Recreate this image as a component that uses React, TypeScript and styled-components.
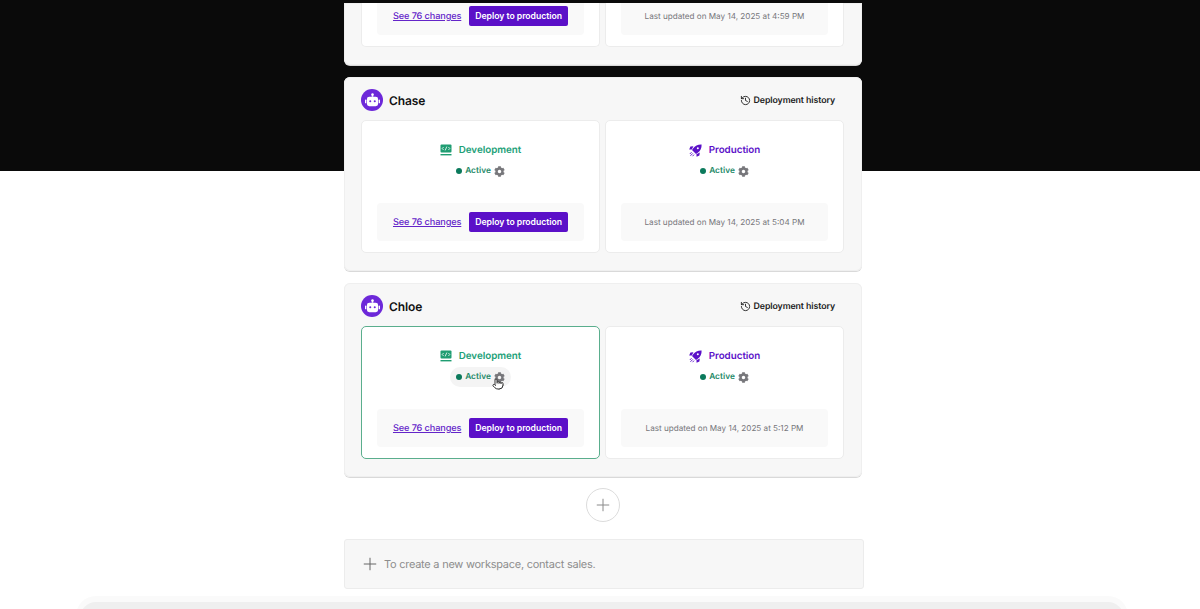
import styled, { createGlobalStyle } from "styled-components";
import { History, Plus, Pointer } from "lucide-react";
import { FaCog } from "react-icons/fa";

const GlobalStyle = createGlobalStyle`
  html, body {
    margin: 0;
    height: 609px;
    overflow: hidden;
    background: linear-gradient(#0a0a0a 0, #0a0a0a 171px, #fff 171px);
    font-family: Inter, "Liberation Sans", sans-serif;
    text-rendering: geometricPrecision;
  }
`;

const Page = styled.div`
  height: 609px;
  padding-top: 3px;
  box-sizing: border-box;
  overflow: hidden;
`;

const Column = styled.div`
  width: 518px;
  margin-left: 344px;
  display: flex;
  flex-direction: column;
`;

const Stack = styled.div`
  display: flex;
  flex-direction: column;
  gap: 12px;
`;

const Card = styled.section`
  height: 194px;
  box-sizing: border-box;
  padding: 0 17px;
  background: #f7f7f7;
  border-radius: 6px;
  box-shadow: 0 1px 0 #d9d9d9, inset 0 0 0 1px #efefef;
`;

const ClippedCard = styled(Card)`
  height: 62px;
  border-radius: 0 0 6px 6px;
`;

const CardHead = styled.header`
  height: 43px;
  padding: 3px 10px 0 0;
  box-sizing: border-box;
  display: flex;
  align-items: center;
  justify-content: space-between;
`;

const Identity = styled.div`
  display: flex;
  align-items: center;
  gap: 6px;
`;

const Avatar = styled.div`
  width: 22px;
  height: 22px;
  border-radius: 50%;
  background: #6d28d9;
  display: flex;
  align-items: center;
  justify-content: center;
`;

const AgentName = styled.h2`
  margin: 0;
  font-size: 12px;
  font-weight: 600;
  letter-spacing: -0.1px;
  color: #111;
`;

const HistoryLink = styled.a`
  display: flex;
  align-items: center;
  gap: 3px;
  font-size: 8.8px;
  font-weight: 600;
  letter-spacing: -0.1px;
  color: #222;
`;

const Panels = styled.div`
  display: grid;
  grid-template-columns: 239px 239px;
  gap: 5px;
`;

const Panel = styled.div<{ $selected?: boolean }>`
  height: 133px;
  box-sizing: border-box;
  background: #fff;
  border: 1px solid ${({ $selected }) => ($selected ? "#5aae8d" : "#ececec")};
  border-radius: 5px;
  padding: 15px 15px 11px;
  display: flex;
  flex-direction: column;
  align-items: center;
`;

const ClippedPanel = styled(Panel)`
  height: 44px;
  padding-top: 0;
  border-top: 0;
  border-radius: 0 0 5px 5px;
  overflow: hidden;
  justify-content: flex-end;
`;

const EnvTitle = styled.div<{ $color: string }>`
  display: flex;
  align-items: center;
  gap: 7px;
  height: 16px;
  margin-top: 6px;
  font-size: 9.8px;
  font-weight: 600;
  letter-spacing: -0.02px;
  color: ${({ $color }) => $color};
`;

const Status = styled.div<{ $hover?: boolean }>`
  position: relative;
  margin-top: 3px;
  height: 20px;
  padding: 0 6px;
  display: flex;
  align-items: center;
  gap: 3px;
  border-radius: 10px;
  background: ${({ $hover }) => ($hover ? "#f4f4f4" : "#fff")};
  font-size: 8.4px;
  font-weight: 600;
  color: #1e8a68;
`;

const Dot = styled.span`
  width: 6px;
  height: 6px;
  border-radius: 50%;
  background: #0b7a5c;
`;

const Gear = styled(FaCog)`
  width: 11px;
  height: 11px;
  color: #77777b;
`;

const Cursor = styled(Pointer)`
  position: absolute;
  left: 42px;
  top: 11px;
  width: 12px;
  height: 12px;
  color: #333;
  fill: #fff;
`;

const PanelFooter = styled.div`
  margin-top: auto;
  flex-shrink: 0;
  align-self: stretch;
  height: 38px;
  background: #f9f9f9;
  border-radius: 4px;
  display: flex;
  align-items: center;
  justify-content: center;
  gap: 8px;
`;

const ClippedFooter = styled(PanelFooter)`
  margin-top: 0;
`;

const ChangesLink = styled.a`
  font-size: 9.2px;
  font-weight: 500;
  letter-spacing: -0.13px;
  color: #6425c9;
  text-decoration: underline;
`;

const DeployButton = styled.button`
  height: 20px;
  padding: 0 6px;
  border: 0;
  border-radius: 2px;
  background: #5b10c8;
  color: #fff;
  font-family: inherit;
  font-size: 8.7px;
  font-weight: 600;
  letter-spacing: -0.05px;
`;

const Updated = styled.span`
  font-size: 8.15px;
  color: #77777b;
`;

const AddRow = styled.div`
  height: 62px;
  padding-bottom: 6px;
  box-sizing: border-box;
  display: flex;
  align-items: center;
  justify-content: center;
`;

const AddButton = styled.button`
  width: 34px;
  height: 34px;
  padding: 0;
  border: 1px solid #dcdcdc;
  border-radius: 50%;
  background: #fff;
  color: #8a8a8a;
  display: flex;
  align-items: center;
  justify-content: center;
`;

const ContactBox = styled.div`
  width: 520px;
  height: 50px;
  box-sizing: border-box;
  padding-left: 15px;
  display: flex;
  align-items: center;
  gap: 4px;
  background: #f7f7f7;
  border: 1px solid #ececec;
  border-radius: 3px;
  font-size: 11px;
  letter-spacing: -0.25px;
  color: #8d8d8d;
`;

const BottomPeek = styled.div`
  margin: 7px 72px 0 76px;
  height: 24px;
  padding: 6px 4px 0;
  box-sizing: border-box;
  background: #fafafa;
  border-radius: 20px 20px 0 0;
`;

const BottomInner = styled.div`
  height: 100%;
  background: #efefef;
  border-radius: 16px 16px 0 0;
`;

const BotIcon = () => (
  <svg width="15" height="15" viewBox="0 0 16 16" fill="#fff">
    <rect x="7.2" y="1" width="1.6" height="3" />
    <circle cx="8" cy="1.6" r="1.3" />
    <path d="M4.6 4h6.8A2.6 2.6 0 0 1 14 6.6v4.8a2.6 2.6 0 0 1-2.6 2.6H4.6A2.6 2.6 0 0 1 2 11.4V6.6A2.6 2.6 0 0 1 4.6 4z" />
    <rect x="0" y="7" width="1.4" height="4" rx="0.7" />
    <rect x="14.6" y="7" width="1.4" height="4" rx="0.7" />
    <circle cx="5.6" cy="8.8" r="1.1" fill="#6d28d9" />
    <circle cx="10.4" cy="8.8" r="1.1" fill="#6d28d9" />
  </svg>
);

const DevIcon = () => (
  <svg width="12" height="12" viewBox="0 0 12 12" fill="none">
    <rect x="0.5" y="0.5" width="11" height="8" rx="1" fill="#1f9d72" />
    <path d="M3.6 3 2.2 4.5 3.6 6M8.4 3l1.4 1.5L8.4 6M6.8 2.6 5.2 6.4" stroke="#fff" strokeWidth="0.8" />
    <rect x="0.5" y="10" width="11" height="1.4" fill="#1f9d72" />
  </svg>
);

const RocketIcon = () => (
  <svg width="13" height="13" viewBox="0 0 13 13" fill="#5b10c8">
    <path d="M12.6.4C9.2.2 6 1.6 4.2 4.2L3 6l4 4 1.8-1.2c2.6-1.8 4-5 3.8-8.4z" />
    <path d="M4.4 2.2 1.4 2.6.2 5.4l2.6.2zM10.8 8.6l-.4 3-2.8 1.2-.2-2.6z" />
    <circle cx="8.8" cy="4.2" r="1" fill="#fff" />
    <path d="M2.6 8.2.8 10M3.8 9.4 1.4 11.8M5 10.6l-1.4 1.6" stroke="#5b10c8" strokeWidth="0.9" fill="none" />
  </svg>
);

type EnvPanelProps = {
  updated?: string;
  selected?: boolean;
  hover?: boolean;
};

const DevPanel = ({ selected, hover }: EnvPanelProps) => (
  <Panel $selected={selected}>
    <EnvTitle $color="#21a077">
      <DevIcon />
      Development
    </EnvTitle>
    <Status $hover={hover}>
      <Dot />
      Active
      <Gear />
      {hover && <Cursor />}
    </Status>
    <PanelFooter>
      <ChangesLink>See 76 changes</ChangesLink>
      <DeployButton>Deploy to production</DeployButton>
    </PanelFooter>
  </Panel>
);

const ProdPanel = ({ updated }: EnvPanelProps) => (
  <Panel>
    <EnvTitle $color="#5b10c8">
      <RocketIcon />
      Production
    </EnvTitle>
    <Status>
      <Dot />
      Active
      <Gear />
    </Status>
    <PanelFooter>
      <Updated>Last updated on May 14, 2025 at {updated}</Updated>
    </PanelFooter>
  </Panel>
);

type AgentCardProps = {
  name: string;
  updated: string;
  selected?: boolean;
};

const AgentCard = ({ name, updated, selected }: AgentCardProps) => (
  <Card>
    <CardHead>
      <Identity>
        <Avatar>
          <BotIcon />
        </Avatar>
        <AgentName>{name}</AgentName>
      </Identity>
      <HistoryLink>
        <History size={11} strokeWidth={2} />
        Deployment history
      </HistoryLink>
    </CardHead>
    <Panels>
      <DevPanel selected={selected} hover={selected} />
      <ProdPanel updated={updated} />
    </Panels>
  </Card>
);

export default function App() {
  return (
    <Page>
      <GlobalStyle />
      <Column>
        <Stack>
          {/* first card scrolled past the top, only its bottom edge shows */}
          <ClippedCard>
            <Panels>
              <ClippedPanel>
                <ClippedFooter>
                  <ChangesLink>See 76 changes</ChangesLink>
                  <DeployButton>Deploy to production</DeployButton>
                </ClippedFooter>
              </ClippedPanel>
              <ClippedPanel>
                <ClippedFooter>
                  <Updated>Last updated on May 14, 2025 at 4:59 PM</Updated>
                </ClippedFooter>
              </ClippedPanel>
            </Panels>
          </ClippedCard>
          <AgentCard name="Chase" updated="5:04 PM" />
          <AgentCard name="Chloe" updated="5:12 PM" selected />
        </Stack>
        <AddRow>
          <AddButton>
            <Plus size={20} strokeWidth={1.2} />
          </AddButton>
        </AddRow>
        <ContactBox>
          <Plus size={20} strokeWidth={1.2} color="#666" />
          To create a new workspace, contact sales.
        </ContactBox>
      </Column>
      <BottomPeek>
        <BottomInner />
      </BottomPeek>
    </Page>
  );
}
